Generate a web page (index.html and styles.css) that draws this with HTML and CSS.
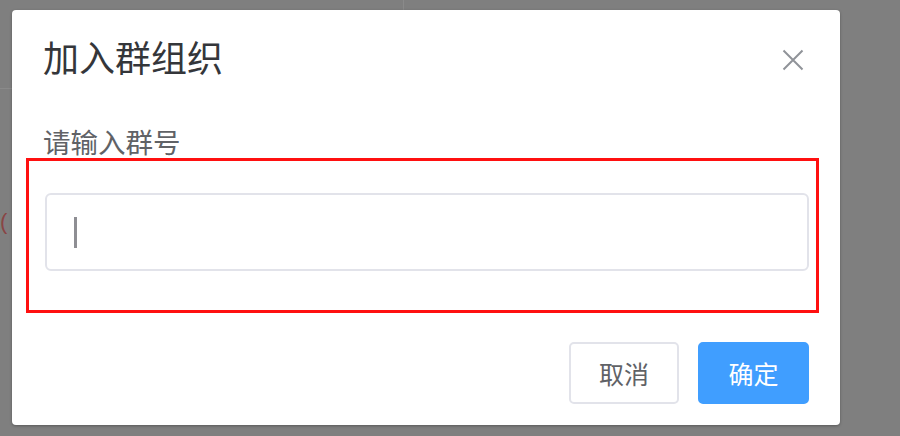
FILE: index.html
```html
<!DOCTYPE html>
<html lang="zh-CN">
<head>
<meta charset="utf-8">
<title>加入群组织</title>
<link rel="stylesheet" href="styles.css">
</head>
<body>
<div class="backdrop" aria-hidden="true">
  <span class="bg-vline"></span>
  <span class="bg-hline"></span>
  <span class="bg-paren">(</span>
</div>
<div class="dialog" role="dialog" aria-label="加入群组织">
  <div class="dialog-header">
    <h2 class="dialog-title">加入群组织</h2>
    <button class="dialog-close" aria-label="关闭">
      <svg width="22" height="22" viewBox="0 0 22 22"><path d="M1.5 1.5 L20.5 20.5 M20.5 1.5 L1.5 20.5" stroke="#909399" stroke-width="2" fill="none"/></svg>
    </button>
  </div>
  <div class="dialog-body">
    <div class="field-label">请输入群号</div>
    <div class="highlight">
      <div class="text-input" role="textbox"><span class="caret"></span></div>
    </div>
  </div>
  <div class="dialog-footer">
    <button class="btn btn-default">取消</button>
    <button class="btn btn-primary">确定</button>
  </div>
</div>
</body>
</html>
```
FILE: styles.css
```css
* { box-sizing: border-box; }
html, body { margin: 0; height: 100%; }
body {
  background: #7f7f7f;
  font-family: "Noto Sans CJK SC", "Noto Sans", sans-serif;
  padding: 10px 0 0 12px;
  overflow: hidden;
  position: relative;
}
.backdrop { position: absolute; inset: 0; }
.bg-vline { position: absolute; left: 403px; top: 0; width: 1px; height: 10px; background: #8a8a8a; }
.bg-hline { position: absolute; left: 0; top: 88px; width: 12px; height: 1px; background: #8a8a8a; }
.bg-paren { position: absolute; left: 0; top: 207px; font-size: 22px; line-height: 30px; color: #8a4545; font-family: "Liberation Sans", sans-serif; }

.dialog {
  position: relative;
  width: 828px;
  height: 415px;
  background: #fff;
  border-radius: 4px;
  box-shadow: 0 1px 3px rgba(0,0,0,0.3);
  padding: 28px 31px 21px 31px;
  display: flex;
  flex-direction: column;
}
.dialog-header {
  display: flex;
  justify-content: space-between;
  align-items: center;
  height: 36px;
}
.dialog-title {
  margin: 0;
  font-size: 36px;
  line-height: 36px;
  font-weight: normal;
  color: #34363a;
}
.dialog-close {
  border: 0;
  background: none;
  padding: 0;
  width: 22px;
  height: 22px;
  margin-right: 5px;
  margin-top: 8px;
  display: flex;
}
.dialog-body { display: flex; flex-direction: column; }
.field-label {
  margin-top: 53px;
  font-size: 27.5px;
  line-height: 28px;
  color: #606266;
}
.highlight {
  margin: 3px -10px 0 -17px;
  border: 3px solid #ff1010;
  padding: 32px 7px 39px 16px;
}
.text-input {
  height: 78px;
  border: 2px solid #e2e3ea;
  border-radius: 6px;
  display: flex;
  align-items: center;
  padding-left: 27px;
}
.caret {
  width: 3px;
  height: 31px;
  background: #8e8e93;
}
.dialog-footer {
  margin-top: 29px;
  display: flex;
  justify-content: flex-end;
  gap: 19px;
}
.btn {
  height: 62px;
  border-radius: 5px;
  font-family: "Noto Sans CJK SC", sans-serif;
  font-size: 25px;
  padding: 0;
}
.btn-default {
  width: 110px;
  background: #fff;
  border: 2px solid #e2e3ea;
  color: #606266;
}
.btn-primary {
  width: 111px;
  background: #409eff;
  border: 2px solid #409eff;
  color: #fff;
}
```
